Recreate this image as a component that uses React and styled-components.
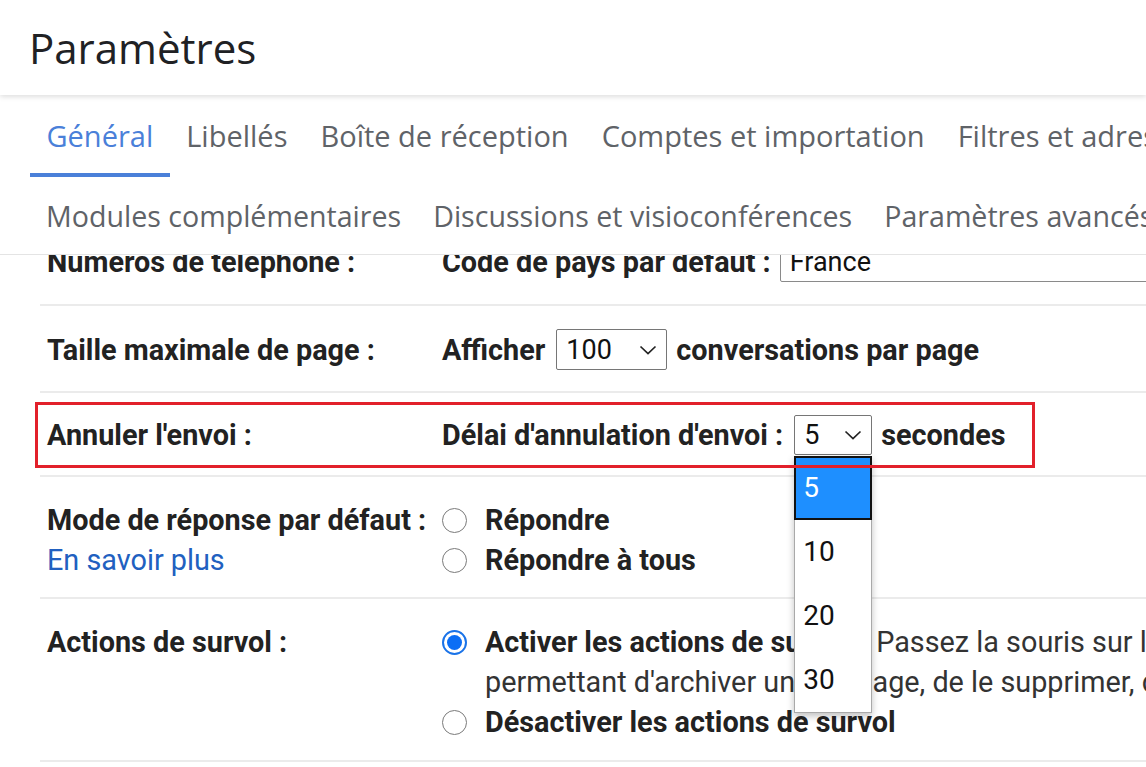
import React from "react";
import styled, { createGlobalStyle } from "styled-components";

const GlobalStyle = createGlobalStyle`
  html, body { margin: 0; padding: 0; background: #fff; overflow: hidden; }
  body { font-family: Roboto, "Liberation Sans", Arial, sans-serif; }
  * { box-sizing: border-box; }
`;

const Page = styled.div`
  width: 1146px;
  height: 767px;
  overflow: hidden;
  display: flex;
  flex-direction: column;
  background: #fff;
`;

const Header = styled.header`
  height: 95px;
  flex-shrink: 0;
  display: flex;
  align-items: center;
  padding-left: 29px;
  box-shadow: 0 2px 5px rgba(0, 0, 0, 0.13);
  position: relative;
  z-index: 2;
  background: #fff;
`;

const Title = styled.h1`
  margin: 0;
  font-family: "Open Sans", "Liberation Sans", sans-serif;
  font-weight: 400;
  font-size: 42px;
  line-height: 1;
  color: #202124;
`;

const TabsArea = styled.nav`
  flex-shrink: 0;
  padding-left: 30px;
  border-bottom: 1px solid #e4e4e4;
  white-space: nowrap;
`;

const TabRow = styled.div`
  display: flex;
  height: ${(p) => p.$h}px;
`;

const Tab = styled.div`
  padding: 0 ${(p) => p.$padX}px;
  display: flex;
  align-items: center;
  flex-shrink: 0;
  font-family: "Open Sans", "Liberation Sans", sans-serif;
  font-size: ${(p) => p.$size}px;
  font-weight: 400;
  color: ${(p) => (p.$active ? "#4a80d9" : "#5f6368")};
  border-bottom: ${(p) => (p.$underline ? "4px solid" : "0 solid")}
    ${(p) => (p.$active ? "#4a80d9" : "transparent")};
  padding-top: ${(p) => (p.$underline ? "3px" : "0")};
`;

const Content = styled.main`
  flex: 1;
  overflow: hidden;
  padding-left: 40px;
`;

const Row = styled.div`
  position: relative;
  display: flex;
  align-items: ${(p) => (p.$top ? "flex-start" : "center")};
  padding: ${(p) => p.$pt}px 0 ${(p) => p.$pb}px;
  margin-top: ${(p) => p.$shift || 0}px;
  border-bottom: 2px solid #ebebeb;
  white-space: nowrap;
  width: 1600px;
`;

const Label = styled.div`
  width: 402px;
  flex-shrink: 0;
  padding-left: 7px;
  font-size: 28.8px;
  font-weight: 700;
  line-height: 40px;
  color: #222;
  display: flex;
  flex-direction: column;
`;

const Link = styled.span`
  font-weight: 400;
  color: #2160c0;
`;

const Value = styled.div`
  display: flex;
  flex-direction: ${(p) => (p.$column ? "column" : "row")};
  align-items: ${(p) => (p.$column ? "stretch" : "center")};
  font-size: 28.8px;
  font-weight: 700;
  line-height: 40px;
  color: #222;
`;

const SelectWrap = styled.div`
  position: relative;
  margin: 0 9px 0 11px;
`;

const SelectBox = styled.div`
  display: flex;
  align-items: center;
  justify-content: space-between;
  width: ${(p) => p.$w}px;
  height: ${(p) => p.$h}px;
  border: 1px solid #767676;
  border-radius: 2px;
  padding: 0 9px 0 9px;
  font-size: 27px;
  font-weight: 400;
  color: #111;
  background: #fff;
`;

const TextField = styled.div`
  width: 600px;
  height: 41px;
  margin-left: 9px;
  border: 1px solid #8a8a8a;
  border-radius: 2px;
  padding-left: 9px;
  display: flex;
  align-items: center;
  font-size: 27px;
  font-weight: 400;
  color: #111;
`;

const List = styled.ul`
  position: absolute;
  top: 100%;
  left: 0;
  width: 78px;
  margin: 1px 0 0;
  padding: 0;
  list-style: none;
  background: #fff;
  border: 1px solid #a9a9a9;
  box-shadow: 0 3px 7px rgba(0, 0, 0, 0.25);
  z-index: 10;
`;

const Option = styled.li`
  height: 64px;
  display: flex;
  align-items: center;
  padding-left: ${(p) => (p.$selected ? "7px" : "8px")};
  font-size: 28px;
  font-weight: 400;
  color: ${(p) => (p.$selected ? "#fff" : "#111")};
  background: ${(p) => (p.$selected ? "#1e8fff" : "#fff")};
  border: ${(p) => (p.$selected ? "2px solid #111" : "none")};
  margin: ${(p) => (p.$selected ? "-1px -1px 0" : "0")};
`;

const Highlight = styled.div`
  position: absolute;
  left: -5px;
  top: 9px;
  width: 1000px;
  height: 66px;
  border: 3px solid #e2202a;
  pointer-events: none;
  z-index: 20;
`;

const Choice = styled.div`
  display: flex;
  align-items: flex-start;
`;

const Radio = styled.span`
  width: 25px;
  height: 25px;
  margin-top: 8px;
  margin-right: 18px;
  border-radius: 50%;
  flex-shrink: 0;
  border: ${(p) => (p.$checked ? "2px solid #1a73e8" : "1.5px solid #7a7a7a")};
  display: flex;
  align-items: center;
  justify-content: center;
  background: #fff;
  &::after {
    content: "";
    display: ${(p) => (p.$checked ? "block" : "none")};
    width: 15px;
    height: 15px;
    border-radius: 50%;
    background: #0b6ef5;
  }
`;

const ChoiceText = styled.div`
  display: flex;
  flex-direction: column;
`;

const Desc = styled.span`
  font-weight: 400;
  color: #333;
`;

const Chevron = () => (
  <svg width="18" height="10" viewBox="0 0 18 10" fill="none">
    <polyline points="1.5,1.5 9,8.5 16.5,1.5" stroke="#222" strokeWidth="1.7" />
  </svg>
);

const tabs1 = [
  "Général",
  "Libellés",
  "Boîte de réception",
  "Comptes et importation",
  "Filtres et adresses bloquées",
  "Transfert et POP/IMAP",
];
const tabs2 = [
  "Modules complémentaires",
  "Discussions et visioconférences",
  "Paramètres avancés",
  "Hors connexion",
  "Thèmes",
];

export default function App() {
  return (
    <Page>
      <GlobalStyle />
      <Header>
        <Title>Paramètres</Title>
      </Header>
      <TabsArea>
        <TabRow $h={82}>
          {tabs1.map((t, i) => (
            <Tab key={t} $active={i === 0} $underline $size={29} $padX={16.5}>
              {t}
            </Tab>
          ))}
        </TabRow>
        <TabRow $h={77}>
          {tabs2.map((t) => (
            <Tab key={t} $size={28.6} $padX={16}>
              {t}
            </Tab>
          ))}
        </TabRow>
      </TabsArea>
      <Content>
        <Row $pt={22} $pb={22} $shift={-36}>
          <Label>Numéros de téléphone :</Label>
          <Value>
            Code de pays par défaut :<TextField>France</TextField>
          </Value>
        </Row>
        <Row $pt={23} $pb={21}>
          <Label>Taille maximale de page :</Label>
          <Value>
            Afficher
            <SelectWrap>
              <SelectBox $w={111} $h={41}>
                100
                <Chevron />
              </SelectBox>
            </SelectWrap>
            conversations par page
          </Value>
        </Row>
        <Row $pt={22} $pb={20}>
          <Highlight />
          <Label>Annuler l'envoi :</Label>
          <Value>
            Délai d'annulation d'envoi :
            <SelectWrap>
              <SelectBox $w={78} $h={40}>
                5
                <Chevron />
              </SelectBox>
              <List>
                <Option $selected>5</Option>
                <Option>10</Option>
                <Option>20</Option>
                <Option>30</Option>
              </List>
            </SelectWrap>
            secondes
          </Value>
        </Row>
        <Row $pt={23} $pb={17} $top>
          <Label>
            Mode de réponse par défaut :<Link>En savoir plus</Link>
          </Label>
          <Value $column>
            <Choice>
              <Radio />
              Répondre
            </Choice>
            <Choice>
              <Radio />
              Répondre à tous
            </Choice>
          </Value>
        </Row>
        <Row $pt={23} $pb={18} $top>
          <Label>Actions de survol :</Label>
          <Value $column>
            <Choice>
              <Radio $checked />
              <ChoiceText>
                <span>
                  Activer les actions de survol -{" "}
                  <Desc>
                    Passez la souris sur les conversations pour accéder rapidement à des commandes
                  </Desc>
                </span>
                <Desc>
                  permettant d'archiver un message, de le supprimer, de le marquer comme lu ou de le
                  mettre en attente.
                </Desc>
              </ChoiceText>
            </Choice>
            <Choice>
              <Radio />
              Désactiver les actions de survol
            </Choice>
          </Value>
        </Row>
      </Content>
    </Page>
  );
}
